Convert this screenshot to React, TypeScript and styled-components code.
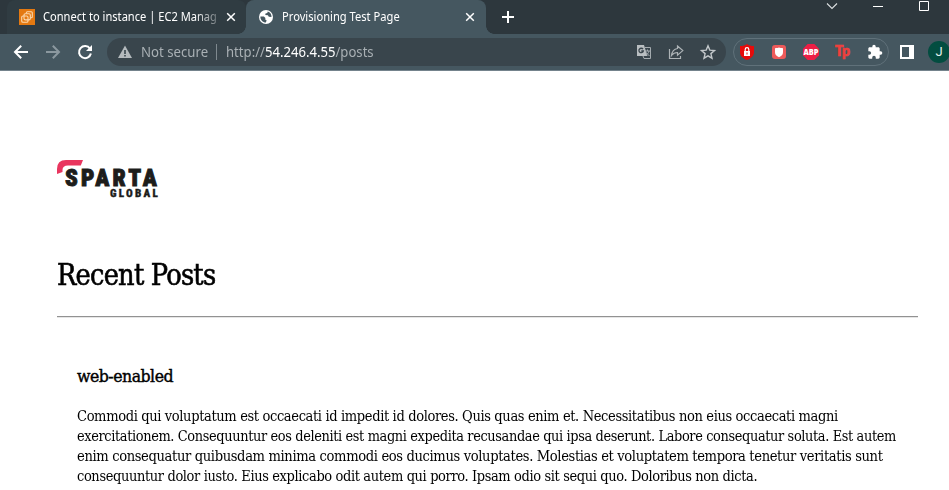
import React, { useLayoutEffect, useRef, useState } from "react";
import styled, { createGlobalStyle } from "styled-components";

const GlobalStyle = createGlobalStyle`
  * { box-sizing: border-box; }
  html, body { margin: 0; height: 100%; overflow: hidden; background: #fff; }
`;

const Window = styled.div`
  width: 949px;
  height: 490px;
  overflow: hidden;
  background: #fff;
  font-family: "Noto Sans", "Open Sans", sans-serif;
`;

const TabStrip = styled.header`
  display: flex;
  height: 34px;
  padding-left: 7px;
  background: #2d373d;
`;

const Tab = styled.div<{ $active?: boolean }>`
  position: relative;
  display: flex;
  align-items: center;
  width: ${(p) => (p.$active ? 240 : 239)}px;
  padding: 0 ${(p) => (p.$active ? 10 : 9)}px 0 12px;
  border-radius: ${(p) => (p.$active ? "8px 8px 0 0" : "8px 8px 8px 0")};
  background: ${(p) => (p.$active ? "#455760" : "#303c42")};
  color: #fff;
  font-size: 12px;

  &::before, &::after {
    content: "";
    display: ${(p) => (p.$active ? "block" : "none")};
    position: absolute;
    bottom: 0;
    width: 8px;
    height: 8px;
  }
  &::before { left: -8px; background: radial-gradient(circle at 0 0, transparent 7.5px, #455760 8px); }
  &::after { right: -8px; background: radial-gradient(circle at 100% 0, transparent 7.5px, #455760 8px); }
`;

const TabTitle = styled.div<{ $fade?: boolean }>`
  flex: none;
  width: ${(p) => (p.$fade ? 176 : 182)}px;
  margin: 0 ${(p) => (p.$fade ? 6 : 0)}px 0 8px;
  line-height: 18px;
  ${(p) => p.$fade && "mask-image: linear-gradient(90deg, #000 152px, rgba(0, 0, 0, 0.25) 175px);"}
`;

const NewTab = styled.div`
  display: flex;
  align-items: center;
  margin-left: 15px;
`;

const WindowControls = styled.div`
  display: flex;
  gap: 36px;
  margin-left: auto;
  padding-right: 20px;
`;

const Icon = styled.svg`
  display: block;
  flex: none;
  overflow: visible;
`;

const Toolbar = styled.nav`
  display: flex;
  align-items: center;
  height: 37px;
  padding: 0 0 1px 13px;
  background: #455760;
  border-bottom: 1px solid #74838c;
`;

const NavButtons = styled.div`
  display: flex;
  gap: 16px;
`;

const AddressBar = styled.div`
  display: flex;
  flex: none;
  align-items: center;
  width: 619px;
  height: 28px;
  margin-left: 14px;
  padding: 0 11px;
  border-radius: 14px;
  background: #39454c;
  color: #a9b0b4;
  font-size: 14px;
  line-height: 20px;
`;

const Security = styled.div`
  display: flex;
  align-items: center;
  gap: 9px;
  width: 98px;
`;

const Divider = styled.i`
  width: 1px;
  height: 16px;
  margin-right: 9px;
  background: #7f898f;
`;

const Host = styled.b`
  color: #fff;
  font-weight: 400;
`;

const AddressActions = styled.div`
  display: flex;
  gap: 16px;
  margin: 0 -1px 0 auto;
`;

const Extensions = styled.div`
  display: flex;
  flex: none;
  align-items: center;
  gap: 16px;
  width: 156px;
  height: 28px;
  margin-left: 7px;
  padding-left: 5px;
  border: 1px solid #60717a;
  border-radius: 14px;
`;

const SidePanel = styled.div`
  margin-left: 10px;
`;

const Avatar = styled.div`
  flex: none;
  width: 22px;
  height: 22px;
  margin-left: 13px;
  border-radius: 50%;
  background: #034d40;
  color: #e3f0ec;
  font-family: Roboto, sans-serif;
  font-size: 13px;
  line-height: 22px;
  text-align: center;
`;

const Page = styled.main`
  padding: 89px 31px 0 57px;
  color: #000;
  font-family: "DejaVu Serif", serif;
  font-stretch: condensed;
`;

const Title = styled.h1`
  margin: 57px 0 22px;
  font-size: 29.5px;
  font-weight: 400;
  letter-spacing: -0.8px;
  line-height: 38px;
  -webkit-text-stroke: 0.6px #000;
`;

const Rule = styled.hr`
  height: 2px;
  margin: 0;
  border: 0;
  border-top: 1px solid #929292;
  border-bottom: 1px solid #e6e6e6;
`;

const Post = styled.article`
  padding: 46px 20px 0;
`;

const PostTitle = styled.h2`
  margin: 0 0 18px;
  font-size: 17.5px;
  font-weight: 400;
  letter-spacing: -0.5px;
  line-height: 24px;
  -webkit-text-stroke: 0.4px #000;
`;

const PostBody = styled.p`
  margin: 0;
  font-size: 15.5px;
  letter-spacing: -0.4px;
  line-height: 20px;
`;

const FittedText = styled.span`
  display: block;
  width: max-content;
  white-space: nowrap;
  transform-origin: 0 50%;
`;

function Fit({ width, children }: { width: number; children: React.ReactNode }) {
  const ref = useRef<HTMLSpanElement>(null);
  const [scale, setScale] = useState(1);
  useLayoutEffect(() => {
    if (ref.current) setScale(width / ref.current.offsetWidth);
  }, [width]);
  return (
    <FittedText ref={ref} style={{ transform: `scaleX(${scale})` }}>
      {children}
    </FittedText>
  );
}

const Close = () => (
  <Icon width="12" height="12" viewBox="0 0 12 12" stroke="#fff" strokeWidth="1.5">
    <path d="M2.2 2.2l7.6 7.6M9.8 2.2L2.2 9.8" />
  </Icon>
);

const lines: [number, string][] = [
  [761, "Commodi qui voluptatum est occaecati id impedit id dolores. Quis quas enim et. Necessitatibus non eius occaecati magni"],
  [819, "exercitationem. Consequuntur eos deleniti est magni expedita recusandae qui ipsa deserunt. Labore consequatur soluta. Est autem"],
  [806, "enim consequatur quibusdam minima commodi eos ducimus voluptates. Molestias et voluptatem tempora tenetur veritatis sunt"],
  [680, "consequuntur dolor iusto. Eius explicabo odit autem qui porro. Ipsam odio sit sequi quo. Doloribus non dicta."],
];

export default function App() {
  return (
    <Window>
      <GlobalStyle />
      <TabStrip>
        <Tab>
          <Icon width="16" height="16" viewBox="0 0 16 16">
            <path fill="#e47911" d="M0 0h16v16H0z" />
            <g fill="none" stroke="#fbd9af" strokeWidth="1.1">
              <rect x="2.7" y="7" width="6.3" height="6.2" rx="1.3" />
              <rect x="5" y="4.7" width="6.3" height="6.2" rx="1.3" />
              <path d="M7.3 4.5V3.7q0-1 1-1h4q1 0 1 1v4q0 1-1 1h-1" />
            </g>
          </Icon>
          <TabTitle $fade><Fit width={174}>Connect to instance | EC2 Manag</Fit></TabTitle>
          <Close />
        </Tab>
        <Tab $active>
          <Icon width="16" height="16" viewBox="0 0 16 16">
            <circle cx="8" cy="8" r="7" fill="#fff" />
            <path fill="#455760" d="M2.4 7.4l3.5.1 1.5 1.4-.2 1.5 1.4.9-.7 2.2C4.8 13.2 2.1 10.7 2.4 7.4zM9.7 2.6l-.4 1.5-1.8.5-.2 1.3 2.6.3.9 1.5 2.7.4C13.7 5.6 12.2 3.4 9.7 2.6z" />
          </Icon>
          <TabTitle><Fit width={118}>Provisioning Test Page</Fit></TabTitle>
          <Close />
        </Tab>
        <NewTab>
          <Icon width="14" height="14" viewBox="0 0 14 14" stroke="#fff" strokeWidth="2"><path d="M7 1v12M1 7h12" /></Icon>
        </NewTab>
        <WindowControls>
          <Icon width="10" height="12" viewBox="0 0 10 12" fill="none" stroke="#dce0e2" strokeWidth="1.1"><path d="M0 3.5l5 5 5-5" /></Icon>
          <Icon width="10" height="12" viewBox="0 0 10 12" fill="#fff"><path d="M0 6h10v1H0z" /></Icon>
          <Icon width="10" height="12" viewBox="0 0 10 12" fill="none" stroke="#fff"><path d="M.5 1.5h9v9h-9z" /></Icon>
        </WindowControls>
      </TabStrip>

      <Toolbar>
        <NavButtons>
          <Icon width="16" height="16" viewBox="0 0 16 16" fill="none" stroke="#fff" strokeWidth="2"><path d="M15 8H2.5M8.2 1.8L2 8l6.2 6.2" /></Icon>
          <Icon width="16" height="16" viewBox="0 0 16 16" fill="none" stroke="#8b989f" strokeWidth="2"><path d="M1 8h12.5M7.8 1.8L14 8l-6.2 6.2" /></Icon>
          <Icon width="16" height="16" viewBox="0 0 16 16"><path d="M13 4.7A6 6 0 1 0 13.9 9.5" fill="none" stroke="#fff" strokeWidth="2" /><path d="M15 1v6H9z" fill="#fff" /></Icon>
        </NavButtons>
        <AddressBar>
          <Security>
            <Icon width="14" height="14" viewBox="0 0 14 14"><path fill="#b4babd" d="M7 .5L14 13H0z" /><path fill="#39454c" d="M6.2 5h1.6v4H6.2zM6.2 10h1.6v1.5H6.2z" /></Icon>
            <Fit width={67}>Not secure</Fit>
          </Security>
          <Divider />
          <Fit width={148}>http://<Host>54.246.4.55</Host>/posts</Fit>
          <AddressActions>
            <Icon width="16" height="16" viewBox="0 0 16 16">
              <path fill="#b9bec1" d="M1 1h7l3.5 11H1z" />
              <path fill="none" stroke="#a4abaf" d="M9 3.5h5.5v11H8L7 12M9 7h5M11.5 5.5V7M13 7c-.5 2-1.8 3.5-3 4M10 8.5l3.5 3.5" />
              <path fill="none" stroke="#39454c" strokeWidth="1.3" d="M7 5.2A2.2 2.2 0 1 0 7.3 7H5.3" />
            </Icon>
            <Icon width="16" height="16" viewBox="0 0 16 16" fill="none" stroke="#adb3b6" strokeWidth="1.2"><path d="M1.5 5v9.5h11V12M9.5 2l5.3 4.6-5.3 4.6V8.5C6.5 8.5 4.9 9.6 3.5 11.5 4 7.5 6 5 9.5 4.5z" /></Icon>
            <Icon width="16" height="16" viewBox="0 0 16 16" fill="none" stroke="#c2c7ca" strokeWidth="1.4"><path d="M8 1.8l1.8 4.3 4.7.4-3.6 3.1 1.1 4.6L8 11.8l-4 2.4 1.1-4.6-3.6-3.1 4.7-.4z" /></Icon>
          </AddressActions>
        </AddressBar>
        <Extensions>
          <Icon width="16" height="16" viewBox="0 0 16 16"><path fill="#e60b0b" d="M8 0c2 1.5 4 2 7 2v6c0 4-3 6.5-7 8-4-1.5-7-4-7-8V2c3 0 5-.5 7-2z" /><path fill="#fff" d="M5 7h6v5H5z" /><path d="M6.2 7V5.5a1.8 1.8 0 0 1 3.6 0V7" fill="none" stroke="#fff" strokeWidth="1.2" /><path d="M8 8.5v2" stroke="#e60b0b" /></Icon>
          <Icon width="16" height="16" viewBox="0 0 16 16"><rect x="1" y="1" width="14" height="14" rx="3" fill="#ed5a5a" /><path fill="#fff" d="M4 4.2c2-.3 3-.3 4-.7 1 .4 2 .4 4 .7v4c0 2.5-1.5 3.8-4 5-2.5-1.2-4-2.5-4-5z" /></Icon>
          <Icon width="16" height="16" viewBox="0 0 16 16"><path fill="#ed1e45" d="M4.7 0h6.6L16 4.7v6.6L11.3 16H4.7L0 11.3V4.7z" /><text x=".5" y="11.3" fill="#fff" fontFamily="Open Sans" fontWeight="800" fontSize="9" textLength="15" lengthAdjust="spacingAndGlyphs">ABP</text></Icon>
          <Icon width="16" height="16" viewBox="0 0 16 16"><text x="0" y="12" fill="#f0403d" stroke="#f0403d" strokeWidth=".7" fontFamily="Lato" fontWeight="900" fontSize="15" textLength="15" lengthAdjust="spacingAndGlyphs">Tp</text></Icon>
          <Icon width="16" height="16" viewBox="0 0 24 24"><path fill="#fff" d="M20.500 11H19V7c0-1.100-.9-2-2-2h-4V3.500a2.500 2.500 0 0 0-5 0V5H4c-1.100 0-2 .9-2 2v3.800h1.500a2.700 2.700 0 0 1 0 5.400H2V20c0 1.100.9 2 2 2h3.800v-1.500a2.700 2.700 0 0 1 5.400 0V22H17c1.100 0 2-.9 2-2v-4h1.500a2.500 2.500 0 0 0 0-5z" /></Icon>
        </Extensions>
        <SidePanel>
          <Icon width="16" height="16" viewBox="0 0 16 16"><path fill="#fff" fillRule="evenodd" d="M1 1h14v14H1zM3 3v10h7V3z" /></Icon>
        </SidePanel>
        <Avatar>J</Avatar>
      </Toolbar>

      <Page>
        <Icon width="102" height="39" viewBox="0 0 102 39" role="img" aria-label="Sparta Global">
          <path fill="#e9365f" d="M0 14V9Q0 0 9 0h17l-2.2 5.500H11Q5.500 5.500 5.500 10v2z" />
          <g fill="#1d1d1b" stroke="#1d1d1b" fontFamily="Roboto" fontWeight="900">
            <text x="8" y="25.500" fontSize="23" strokeWidth=".9" letterSpacing="3" textLength="95" lengthAdjust="spacingAndGlyphs">SPARTA</text>
            <text x="53" y="37" fontSize="11" strokeWidth=".3" letterSpacing="2.200" textLength="50" lengthAdjust="spacingAndGlyphs">GLOBAL</text>
          </g>
        </Icon>
        <Title><Fit width={158}>Recent Posts</Fit></Title>
        <Rule />
        <Post>
          <PostTitle><Fit width={96}>web-enabled</Fit></PostTitle>
          <PostBody>
            {lines.map(([width, text]) => <Fit key={text} width={width}>{text}</Fit>)}
          </PostBody>
        </Post>
      </Page>
    </Window>
  );
}
